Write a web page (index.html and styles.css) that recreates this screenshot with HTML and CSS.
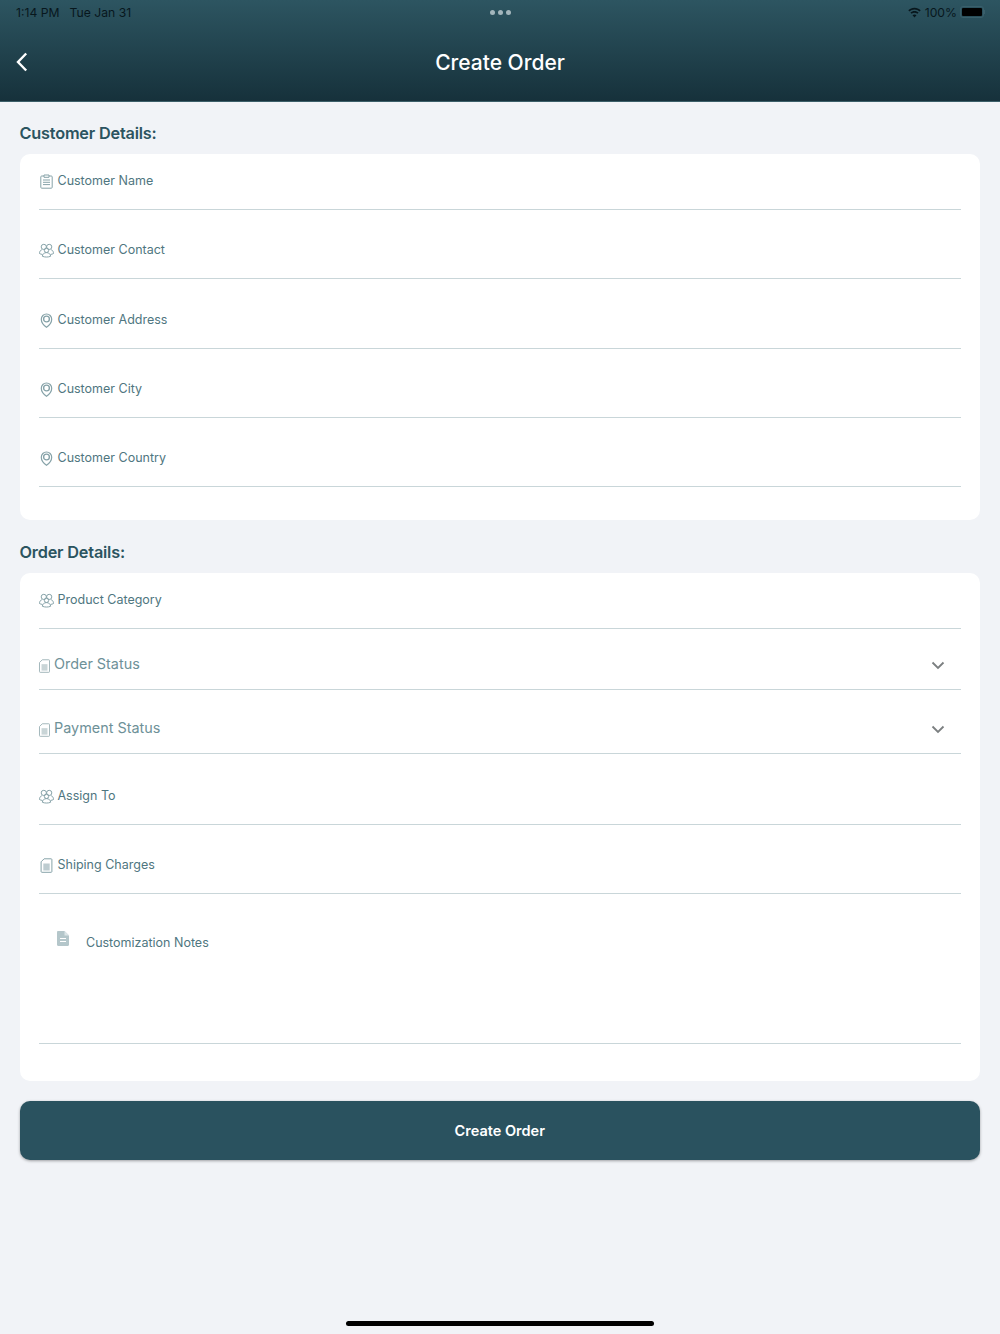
FILE: index.html
```html
<!DOCTYPE html>
<html lang="en">
<head>
<meta charset="UTF-8">
<meta name="viewport" content="width=device-width, initial-scale=1.0">
<title>Create Order</title>
<link rel="stylesheet" href="styles.css">
</head>
<body>
<svg class="sprites" width="0" height="0">
    <symbol id="i-clip" viewBox="0 0 14 15">
        <path d="M4.5 2H2.2a.9.9 0 0 0-.9.9v10.400c0 .5.4.9.9.9h9.600c.5 0 .9-.4.9-.9V2.900a.9.9 0 0 0-.9-.9H9.500M4.500 1h5v2.300h-5zM3.500 6h7M3.500 8.300h7M3.500 10.600h7" fill="none" stroke="currentColor" stroke-width="1"/>
    </symbol>
    <symbol id="i-people" viewBox="0 0 15 14">
        <g fill="none" stroke="currentColor" stroke-width="1">
            <circle cx="4.800" cy="3.400" r="2.600"/>
            <circle cx="10.200" cy="3.400" r="2.600"/>
            <circle cx="7.500" cy="6.800" r="2.200"/>
            <path d="M2.800 6.200C1.300 6.800.5 8.200.5 10c.9.600 1.900.8 2.900.9M12.200 6.200c1.500.6 2.300 2 2.300 3.800-.9.600-1.900.8-2.900.9M3.400 12.800c0-2.200 1.700-3.700 4.100-3.700s4.100 1.500 4.100 3.700c-2.600 1-5.600 1-8.200 0z"/>
        </g>
    </symbol>
    <symbol id="i-pin" viewBox="0 0 14 15">
        <path d="M7 14.300C4.800 12.700 1.800 10.200 1.800 6.200a5.200 5.200 0 0 1 10.400 0c0 4-3 6.500-5.200 8.100z" fill="none" stroke="currentColor" stroke-width="1.200"/>
        <circle cx="7" cy="6" r="2.900" fill="none" stroke="currentColor" stroke-width="1.400"/>
    </symbol>
    <symbol id="i-doc" viewBox="0 0 14 15">
        <path d="M4.600.8h7a.8.8 0 0 1 .8.8v11.900a.8.8 0 0 1-.8.8H2.400a.8.8 0 0 1-.8-.8V3.800z" fill="none" stroke="currentColor" stroke-width="1"/>
        <path d="M3.800 5.500h6.400v7H3.800z" fill="currentColor" opacity=".55"/>
    </symbol>
</svg>

<div class="header">
    <div class="status-bar">
        <div class="status-time"><span>1:14 PM</span><span>Tue Jan 31</span></div>
        <div class="status-dots"><i></i><i></i><i></i></div>
        <div class="status-right">
            <svg class="wifi" width="15" height="11" viewBox="0 0 15 11"><path d="M7.500 2.600c2 0 3.700.8 5 2l1.200-1.300C12.100 1.700 9.900.7 7.500.7S2.900 1.700 1.300 3.300l1.200 1.300c1.300-1.200 3-2 5-2zM7.500 5.700c1.100 0 2.100.4 2.900 1.100l1.200-1.300c-1.100-1-2.500-1.600-4.100-1.600s-3 .6-4.100 1.600l1.200 1.300c.8-.7 1.800-1.100 2.900-1.100zM7.500 10.500l2-2.200c-.5-.5-1.200-.8-2-.8s-1.500.3-2 .8z" fill="#08171d"/></svg>
            <span>100%</span>
            <div class="battery"><div class="battery-fill"></div></div>
            <div class="battery-cap"></div>
        </div>
    </div>
    <div class="nav">
        <svg class="back" width="12" height="20" viewBox="0 0 12 20"><path d="M10.200 1.500 2 10l8.200 8.500" fill="none" stroke="#fff" stroke-width="2.400"/></svg>
        <div class="nav-title">Create Order</div>
    </div>
</div>

<div class="container">
    <h2 class="titulo">Customer Details:</h2>
    <div class="card card-customer">
        <div class="campo"><svg class="ico"><use href="#i-clip"/></svg><span>Customer Name</span></div>
        <div class="campo"><svg class="ico"><use href="#i-people"/></svg><span>Customer Contact</span></div>
        <div class="campo"><svg class="ico"><use href="#i-pin"/></svg><span>Customer Address</span></div>
        <div class="campo"><svg class="ico"><use href="#i-pin"/></svg><span>Customer City</span></div>
        <div class="campo"><svg class="ico"><use href="#i-pin"/></svg><span>Customer Country</span></div>
    </div>

    <h2 class="titulo titulo-order">Order Details:</h2>
    <div class="card card-order">
        <div class="campo"><svg class="ico"><use href="#i-people"/></svg><span>Product Category</span></div>
        <div class="campo campo-select select-order">
            <svg class="ico-small"><use href="#i-doc"/></svg><span>Order Status</span>
            <svg class="seta" width="14" height="9" viewBox="0 0 14 9"><path d="M1.500 1.500 7 7l5.500-5.500" fill="none" stroke="#7b7f80" stroke-width="1.800"/></svg>
        </div>
        <div class="campo campo-select select-payment">
            <svg class="ico-small"><use href="#i-doc"/></svg><span>Payment Status</span>
            <svg class="seta" width="14" height="9" viewBox="0 0 14 9"><path d="M1.500 1.500 7 7l5.500-5.500" fill="none" stroke="#7b7f80" stroke-width="1.800"/></svg>
        </div>
        <div class="campo campo-assign"><svg class="ico"><use href="#i-people"/></svg><span>Assign To</span></div>
        <div class="campo campo-frete"><svg class="ico"><use href="#i-doc"/></svg><span>Shiping Charges</span></div>
        <div class="campo-notas">
            <svg class="ico-notas" width="12" height="15" viewBox="0 0 12 15"><path d="M1.200 0h6.300L12 4.500v9.300c0 .7-.5 1.200-1.200 1.200H1.200C.5 15 0 14.500 0 13.800V1.200C0 .5.500 0 1.200 0z" fill="#b4c6ca"/><path d="M3 7.500h6M3 10.500h6" stroke="#fff" stroke-width="1.200"/><path d="M7.500 0v4.500H12" fill="#dce5e7"/></svg>
            <span>Customization Notes</span>
        </div>
    </div>

    <button class="botao" type="button">Create Order</button>
</div>

<div class="home-bar"></div>
</body>
</html>
```

FILE: styles.css
```css
body {
    margin: 0;
    padding: 0;
    height: 1334px;
    overflow: hidden;
    position: relative;
    font-family: "Inter", "Liberation Sans", sans-serif;
    background-color: #f1f3f7;
    color: #4f7680;
}

.sprites {
    position: absolute;
}

/* topo */
.header {
    height: 101px;
    background: linear-gradient(#2d5561, #16313b);
    border-bottom: 1px solid #3c5f69;
}

.status-bar {
    height: 24px;
    padding: 0 15px 0 16px;
    display: flex;
    align-items: center;
    justify-content: space-between;
    font-size: 12.2px;
    color: #08171d;
}

.status-time {
    display: flex;
    gap: 10px;
    width: 300px;
}

.status-dots {
    display: flex;
    gap: 3px;
}

.status-dots i {
    width: 5px;
    height: 5px;
    border-radius: 50%;
    background-color: #a3b6bc;
}

.status-right {
    width: 300px;
    display: flex;
    align-items: center;
    justify-content: flex-end;
}

.wifi {
    margin-right: 3px;
}

.battery {
    width: 24px;
    height: 12px;
    margin-left: 3px;
    padding: 1px;
    box-sizing: border-box;
    border: 1px solid #3a5f6b;
    border-radius: 3px;
}

.battery-fill {
    height: 100%;
    background-color: #000;
    border-radius: 1px;
}

.battery-cap {
    width: 1px;
    height: 4px;
    background-color: #3a5f6b;
}

.nav {
    height: 77px;
    display: flex;
    align-items: center;
    justify-content: center;
    position: relative;
}

.back {
    position: absolute;
    left: 16px;
    top: 28px;
}

.nav-title {
    font-size: 21px;
    font-weight: 500;
    color: #fff;
}

/* conteudo */
.container {
    padding: 0 20px 0 19.5px;
}

.titulo {
    margin: 0;
    padding-top: 19px;
    height: 33px;
    font-size: 16.3px;
    line-height: 24px;
    font-weight: 600;
    letter-spacing: -.2px;
    color: #2b5460;
}

.titulo-order {
    padding-top: 20px;
}

.card {
    background-color: #fff;
    border-radius: 10px;
    padding: 0 19.5px;
    display: flex;
    flex-direction: column;
}

.card-customer {
    height: 366px;
    gap: 13.33px;
}

.card-order {
    height: 508px;
}

.campo {
    height: 56px;
    flex-shrink: 0;
    box-sizing: border-box;
    padding-top: 18px;
    border-bottom: 1px solid #c9d6d9;
    display: flex;
    align-items: flex-start;
    gap: 3.5px;
    font-size: 12.5px;
    line-height: 18px;
}

.ico {
    width: 15px;
    height: 15px;
    margin-top: 2px;
    color: #87a3a9;
}

.campo-select {
    height: 61px;
    padding-top: 26px;
    gap: 3px;
    font-size: 14.4px;
    color: #6e9198;
    position: relative;
}

.select-payment {
    height: 64px;
    padding-top: 29px;
}

.ico-small {
    width: 13px;
    height: 14px;
    margin: 4px 0 0 -1px;
    color: #9db2b7;
}

.seta {
    position: absolute;
    right: 16px;
    top: 32px;
}

.select-payment .seta {
    top: 35px;
}

.campo-assign {
    height: 71px;
    padding-top: 33px;
}

.campo-frete {
    height: 69px;
    padding-top: 31px;
}

.campo-notas {
    height: 150px;
    flex-shrink: 0;
    box-sizing: border-box;
    padding: 38px 0 0 18px;
    border-bottom: 1px solid #c9d6d9;
    display: flex;
    align-items: flex-start;
    gap: 17px;
    font-size: 12.5px;
    line-height: 18px;
}

.campo-notas span {
    margin-top: 2px;
}

.ico-notas {
    margin-top: -1px;
}

.botao {
    display: block;
    width: 100%;
    height: 59px;
    margin-top: 20px;
    border: none;
    border-radius: 10px;
    background-color: #2a525f;
    color: #fff;
    font-family: inherit;
    font-size: 14.5px;
    font-weight: 600;
    box-shadow: 0 1px 3px rgba(0, 0, 0, .35);
}

.home-bar {
    position: absolute;
    left: 346px;
    top: 1321px;
    width: 308px;
    height: 5px;
    border-radius: 3px;
    background-color: #000;
}
```
